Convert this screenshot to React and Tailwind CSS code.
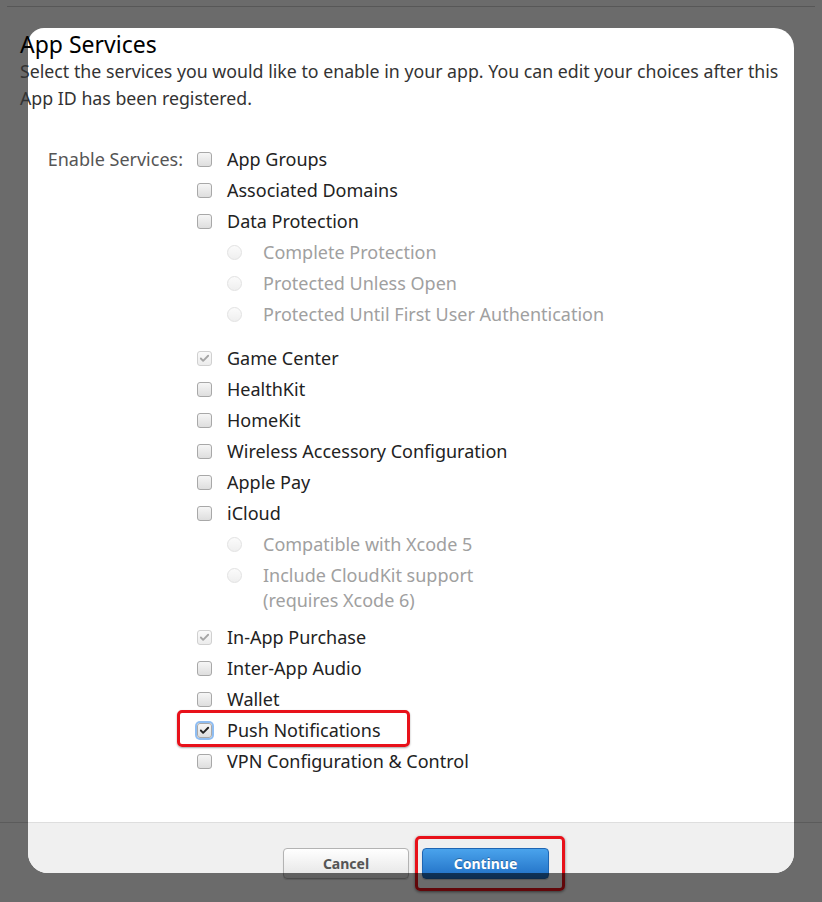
import { Check } from 'lucide-react'

const font = { fontFamily: '"Noto Sans", "DejaVu Sans", sans-serif' }

// services list; `gap` adds space after a group of sub-options
const services = [
  { label: 'App Groups' },
  { label: 'Associated Domains' },
  {
    label: 'Data Protection',
    options: ['Complete Protection', 'Protected Unless Open', 'Protected Until First User Authentication'],
    gap: 'mb-[13px]',
  },
  { label: 'Game Center', checked: true, disabled: true },
  { label: 'HealthKit' },
  { label: 'HomeKit' },
  { label: 'Wireless Accessory Configuration' },
  { label: 'Apple Pay' },
  {
    label: 'iCloud',
    options: ['Compatible with Xcode 5', ['Include CloudKit support', '(requires Xcode 6)']],
    gap: 'mb-[9px]',
  },
  { label: 'In-App Purchase', checked: true, disabled: true },
  { label: 'Inter-App Audio' },
  { label: 'Wallet' },
  { label: 'Push Notifications', checked: true, focused: true },
  { label: 'VPN Configuration & Control' },
]

const Checkbox = ({ checked, disabled, focused }) => (
  <span
    className={
      'relative flex h-[15px] w-[15px] shrink-0 items-center justify-center rounded-[3px] border ' +
      (disabled
        ? 'border-[#d0d0d0] bg-gradient-to-b from-[#fafafa] to-[#ececec]'
        : 'border-[#a8a8a8] bg-gradient-to-b from-[#f6f6f6] to-[#dedede]') +
      (focused ? ' shadow-[0_0_0_2px_#8fbdf2]' : '')
    }
  >
    {checked && (
      <Check
        size={11}
        strokeWidth={4}
        className={disabled ? 'text-[#a5a5a5]' : 'text-[#222]'}
      />
    )}
  </span>
)

const Radio = () => (
  <span className="block h-[15px] w-[15px] shrink-0 rounded-full border border-[#e2e2e2] bg-gradient-to-b from-[#fbfbfb] to-[#efefef]" />
)

const ServiceRow = ({ service }) => (
  <div className={service.gap || ''}>
    <div className="flex h-[31px] items-center gap-[15px] text-[18px] text-[#222]">
      <Checkbox checked={service.checked} disabled={service.disabled} focused={service.focused} />
      <span>{service.label}</span>
    </div>
    {service.options &&
      service.options.map((opt, i) =>
        Array.isArray(opt) ? (
          <div key={i} className="flex gap-[21px] pl-[30px] pt-[3px] text-[18px] leading-[25px] text-[#a0a0a0]">
            <div className="shrink-0 pt-[5px]">
              <Radio />
            </div>
            <span>
              {opt[0]}
              <br />
              {opt[1]}
            </span>
          </div>
        ) : (
          <div key={i} className="flex h-[31px] items-center gap-[21px] pl-[30px] text-[18px] text-[#a0a0a0]">
            <Radio />
            <span>{opt}</span>
          </div>
        )
      )}
  </div>
)

export default function App() {
  return (
    <div className="relative h-[902px] w-[822px] overflow-hidden bg-white" style={font}>
      {/* page behind the sheet */}
      <div className="absolute inset-0">
        <div className="h-[6px]" />
        <div className="mx-[7px] h-px bg-[#cfcfcf]" />
        <div className="h-[815px]" />
        <div className="h-px bg-[#d8d8d8]" />
      </div>
      <div className="absolute inset-x-0 top-0 h-[873px] bg-black/[0.58]" />

      {/* sheet */}
      <div className="absolute left-[28px] top-[28px] flex h-[845px] w-[766px] flex-col rounded-b-[20px] rounded-tl-[16px] rounded-tr-[20px] bg-white">
        <div className="-ml-[8px] flex-1 pt-[2px]">
          <h2 className="text-[23px] leading-[28px] text-black">App Services</h2>
          <p className="whitespace-nowrap text-[17.75px] leading-[27px] text-[#333]">
            Select the services you would like to enable in your app. You can edit your choices after this
            <br />
            App ID has been registered.
          </p>

          <div className="mt-[32px] flex">
            <div className="flex h-[31px] w-[163px] shrink-0 items-center justify-end text-[18px] text-[#555]">
              Enable Services:
            </div>
            <div className="ml-[14px]">
              {services.map((s) => (
                <ServiceRow key={s.label} service={s} />
              ))}
            </div>
          </div>
        </div>

        <div className="h-[51px] rounded-b-[20px] border-t border-[#dedede] bg-[#f0f0f0] pl-[255px] pt-[25px]">
          <div className="flex gap-[13px]">
            <button className="h-[31px] w-[126px] rounded-[4px] border border-[#b3b3b3] bg-gradient-to-b from-white to-[#e4e4e4] text-[14px] font-bold text-[#555] shadow-[0_1px_1px_rgba(0,0,0,0.15)]">
              Cancel
            </button>
            <button className="h-[31px] w-[127px] rounded-[4px] border border-[#1f66b3] bg-gradient-to-b from-[#4aa3ec] to-[#1f6fc4] text-[14px] font-bold text-white shadow-[0_1px_1px_rgba(0,0,0,0.2)] [text-shadow:0_-1px_0_rgba(0,0,0,0.3)]">
              Continue
            </button>
          </div>
        </div>
      </div>

      {/* red annotation boxes */}
      <div className="absolute left-[177px] top-[710px] h-[37px] w-[233px] rounded-[5px] border-[3px] border-[#e8111a] shadow-[0_1px_2px_rgba(0,0,0,0.35)]" />
      <div className="absolute left-[415px] top-[836px] h-[55px] w-[150px] rounded-[5px] border-[3px] border-[#e8111a] shadow-[0_1px_3px_rgba(0,0,0,0.5)]" />

      {/* dim strip below the sheet */}
      <div className="absolute inset-x-0 bottom-0 top-[873px] bg-black/[0.58]" />
    </div>
  )
}
